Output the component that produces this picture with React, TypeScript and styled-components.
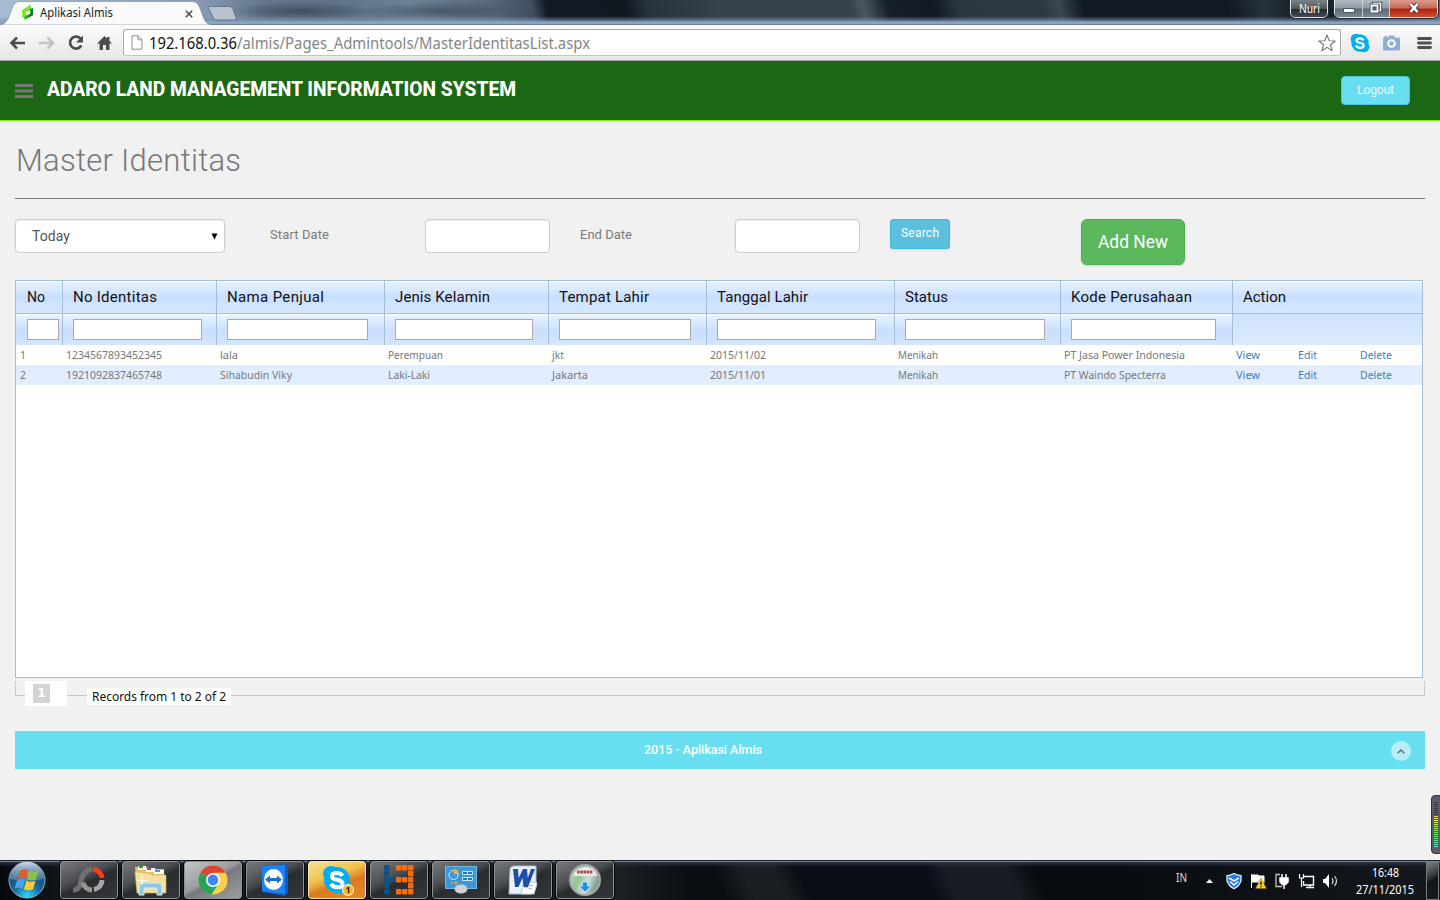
import React, { useLayoutEffect, useRef } from 'react';
import styled, { createGlobalStyle, css } from 'styled-components';

const ruda = `Roboto, "Open Sans", sans-serif`;
const tahoma = `"Noto Sans", "Open Sans", sans-serif`;

const GlobalStyle = createGlobalStyle`
  * { box-sizing: border-box; }
  body { margin: 0; background: #f1f1f1; overflow: hidden; }
  button, input { font: inherit; margin: 0; }
  svg { display: block; flex: none; }
  h1 { margin: 0; font-weight: 400; }
`;

/* A single line of text adjusted to a given width. */
const Line = styled.span`
  display: inline-block;
  white-space: nowrap;
  transform-origin: 0 50%;
`;

function Fit({ w, children }: { w: number; children: string }) {
  const ref = useRef<HTMLSpanElement>(null);
  useLayoutEffect(() => {
    const el = ref.current;
    if (!el) return;
    el.style.width = 'auto';
    el.style.transform = 'none';
    el.style.letterSpacing = '0px';
    const natural = el.getBoundingClientRect().width;
    if (natural > w * 1.02) el.style.transform = `scaleX(${w / natural})`;
    else el.style.letterSpacing = `${(w - natural) / Math.max(1, children.length - 1)}px`;
    el.style.width = `${w}px`;
  }, [w, children]);
  return <Line ref={ref}>{children}</Line>;
}

const Screen = styled.div`
  position: relative;
  width: 1440px;
  height: 900px;
  display: flex;
  flex-direction: column;
  overflow: hidden;
  background: #f1f1f1;
  color: #797979;
  font-family: ${ruda};
`;

/* ---------- browser window ---------- */

const TitleBar = styled.div`
  height: 25px;
  flex: none;
  display: flex;
  border-bottom: 1px solid #6e7f95;
  background:
    linear-gradient(180deg, transparent 0 68%, rgba(122, 148, 182, 0.6) 84%, #8ba3c2 92%),
    radial-gradient(ellipse 75px 9px at 300px 11px, rgba(38, 50, 66, 0.55), transparent),
    radial-gradient(ellipse 90px 9px at 440px 11px, rgba(44, 56, 72, 0.5), transparent),
    linear-gradient(75deg, #a9bdd4 0, #8397b0 205px, #63758a 260px, #5f7287 330px, #6d8196 400px, #56687c 480px, #3f4f61 518px, #121a23 532px, #101820 608px, #26323d 630px, #35424e 700px, #35424e 825px, #4a5763 838px, #17202a 862px, #111922 905px, #2a3641 930px, #2c3843 1010px, #3a4651 1028px, #111a22 1050px, #111922 1190px, #26323e 1225px, #0e161e 1270px, #1c2832 1300px, #76889b 1440px);
`;

const Tab = styled.div`
  position: relative;
  width: 206px;
  height: 25px;
  display: flex;
  align-items: center;
  padding-left: 21px;
  font: 12px/24px ${tahoma};
  color: #222;
`;

const TabShape = styled.svg`
  position: absolute;
  left: 0;
  top: 0;
`;

const TabIcon = styled.svg`
  position: relative;
  margin-right: 5px;
`;

const TabText = styled.div`
  position: relative;
  width: 145px;
  line-height: 25px;
`;

const TabClose = styled.svg`
  position: relative;
  top: 1px;
`;

const WindowControls = styled.div`
  display: flex;
  margin-left: auto;
  margin-right: 2px;
  height: 18px;
`;

const UserButton = styled.div`
  width: 38px;
  height: 18px;
  margin-right: 6px;
  border: 1px solid #dfe5ea;
  border-top: 0;
  border-radius: 0 0 5px 5px;
  outline: 1px solid #202a34;
  background: linear-gradient(#7c8084 0, #52575b 50%, #24292d 52%, #444a50);
  color: #fff;
  font: 12px/17px ${tahoma};
  text-align: center;
`;

const ControlGroup = styled.div`
  display: flex;
  border: 1px solid #dfe5ea;
  border-top: 0;
  border-radius: 0 0 5px 5px;
  outline: 1px solid #202a34;
  overflow: hidden;
`;

const Control = styled.div<{ $w: number; $close?: boolean }>`
  width: ${(p) => p.$w}px;
  display: flex;
  justify-content: center;
  border-right: 1px solid #c7ced6;
  background: ${(p) =>
    p.$close
      ? 'linear-gradient(#d99a8e 0, #c96a58 48%, #a92410 52%, #cf4a2c)'
      : 'linear-gradient(#b3bac3 0, #8f99a5 48%, #5d6976 52%, #7b8896)'};
  &:last-child { border-right: 0; }
`;

const Toolbar = styled.div`
  height: 36px;
  flex: none;
  display: flex;
  align-items: center;
  padding-left: 8px;
  border-bottom: 1px solid #a3a3a3;
  background: linear-gradient(#fbfbfb, #e6e6e6);
`;

const Omnibox = styled.div`
  width: 1218px;
  height: 27px;
  margin: 0 9px 0 9px;
  display: flex;
  align-items: center;
  padding: 0 4px 0 7px;
  border: 1px solid #a9a9a9;
  border-bottom-color: #c4c4c4;
  border-radius: 3px;
  background: #fff;
  font: 16px/24px ${tahoma};
  color: #868686;
  > svg:last-child { margin-left: auto; }
`;

const Host = styled.span`
  margin-left: 6px;
  color: #111;
`;

/* ---------- page ---------- */

const Header = styled.header`
  height: 60px;
  flex: none;
  display: flex;
  align-items: flex-start;
  padding: 0 30px 0 15px;
  border-bottom: 1px solid #7cf216;
  background: #1c6714;
`;

const Brand = styled.div`
  margin: 13px auto 0 14px;
  font: 800 21px/30px ${ruda};
  color: #fff;
`;

const Hamburger = styled.svg`
  margin-top: 23px;
`;

const LogoutButton = styled.button`
  width: 69px;
  height: 29px;
  margin-top: 15px;
  padding: 0 0 1px;
  border: 1px solid #4fc5d9;
  border-radius: 4px;
  background: #68dff0;
  color: #f2f2f2;
  font: 400 12px/25px ${ruda};
`;

const Content = styled.main`
  flex: 1;
  padding: 19px 15px 0;
  min-height: 0;
`;

const PageTitle = styled.h1`
  height: 59px;
  padding-left: 1px;
  border-bottom: 1px solid #777;
  font: 350 31px/41px ${ruda};
  color: #777;
`;

const FilterForm = styled.div`
  display: flex;
  align-items: flex-start;
  height: 61px;
  margin-top: 20px;
  font-size: 13px;
`;

const field = css`
  height: 34px;
  border: 1px solid #ccc;
  border-radius: 4px;
  background: #fff;
  box-shadow: inset 0 1px 1px rgba(0, 0, 0, 0.075);
`;

const PeriodSelect = styled.div`
  ${field}
  width: 210px;
  display: flex;
  align-items: center;
  justify-content: space-between;
  padding: 0 6px 0 16px;
  font-size: 14px;
  color: #555;
`;

const FieldLabel = styled.label`
  width: 155px;
  margin-left: 45px;
  line-height: 32px;
  & + input + & { margin-left: 30px; }
`;

const DateInput = styled.input`
  ${field}
  width: 125px;
  padding: 6px;
`;

const SearchButton = styled.button`
  width: 60px;
  height: 30px;
  margin-left: 30px;
  padding: 0 0 2px;
  border: 1px solid #46b8da;
  border-radius: 3px;
  background: #5bc0de;
  box-shadow: 0 1px 2px rgba(0, 0, 0, 0.12);
  color: #fff;
  font: 400 12px/26px ${ruda};
`;

const AddButton = styled.button`
  width: 104px;
  height: 46px;
  margin-left: 131px;
  padding: 0;
  border: 1px solid #4cae4c;
  border-radius: 6px;
  background: #5cb85c;
  box-shadow: 0 1px 2px rgba(0, 0, 0, 0.12);
  color: #fff;
  font: 400 19px/44px ${ruda};
`;

const GridPanel = styled.section`
  width: 1408px;
  height: 398px;
  border: 1px solid #a3bfd6;
  background: #fff;
`;

const GridRow = styled.div`
  display: grid;
  grid-template-columns: 47px 154px 168px 164px 158px 188px 166px 172px 189px;
`;

const HeadCell = styled.div`
  height: 33px;
  padding-left: 10px;
  border-right: 1px solid #a3bfd6;
  border-bottom: 1px solid #a3bfd6;
  background: linear-gradient(#fff 0, #e6f1ff 2px, #c9dfff 50%, #d3e6ff 85%, #d3e6ff);
  color: #111;
  font: 400 15px/32px ${ruda};
  &:first-child { padding-left: 11px; }
  &:last-child { border-right: 0; }
`;

const FilterCell = styled.div`
  height: 31px;
  padding: 5px 0 0 10px;
  border-right: 1px solid #a3bfd6;
  background: linear-gradient(#fdfdf8 0, #e6f1ff 2px, #c9dfff 55%, #d5e7ff);
  &:first-child { padding-left: 11px; }
  &:last-child { border-right: 0; background: linear-gradient(#cfe2fc, #dbeafe); }
`;

const FilterInput = styled.input<{ $w: number }>`
  display: block;
  width: ${(p) => p.$w}px;
  height: 21px;
  border: 1px solid #a9a9a9;
  background: #fff;
`;

const DataRow = styled(GridRow)<{ $alt: boolean }>`
  height: 20px;
  background: ${(p) => (p.$alt ? '#e2edff' : '#fff')};
  font: 11px/20px ${tahoma};
  color: #777;
`;

const DataCell = styled.div`
  padding-left: 3px;
  &:first-child { padding-left: 4px; }
`;

const Actions = styled(DataCell)`
  display: grid;
  grid-template-columns: 62px 62px 62px;
`;

const ActionLink = styled.a`
  color: #3f7fb8;
`;

const Pager = styled.nav`
  display: flex;
  align-items: flex-start;
  width: 1410px;
  height: 25px;
  margin: 3px 0 25px;
  padding-left: 10px;
  background:
    linear-gradient(#c8c8c4, #c8c8c4) 0 14px / 100% 1px no-repeat,
    linear-gradient(#c8c8c4, #c8c8c4) 0 0 / 1px 14px no-repeat,
    linear-gradient(#c8c8c4, #c8c8c4) 100% 0 / 1px 14px no-repeat;
`;

const PageBox = styled.div`
  width: 42px;
  height: 25px;
  padding: 3px 0 0 8px;
  background: #fff;
`;

const PageNumber = styled.div`
  width: 17px;
  height: 19px;
  background: #d3d3d3;
  color: #fff;
  font: 700 12px/19px "DejaVu Sans", sans-serif;
  text-align: center;
`;

const Records = styled.div`
  width: 144px;
  height: 17px;
  margin: 7px 0 0 20px;
  padding-left: 5px;
  background: #fff;
  color: #111;
  font: 12px/17px ${tahoma};
`;

const Footer = styled.footer`
  height: 38px;
  display: flex;
  align-items: center;
  padding: 0 14px 0 629px;
  background: #68dff0;
  color: #fff;
  font: 500 13px/38px ${ruda};
`;

const TopLink = styled.a`
  width: 20px;
  height: 20px;
  margin: 2px 0 0 auto;
  display: grid;
  place-items: center;
  border-radius: 50%;
  background: rgba(255, 255, 255, 0.5);
`;

/* ---------- desktop ---------- */

const Gauge = styled.div`
  position: absolute;
  left: 1431px;
  top: 795px;
  width: 12px;
  height: 59px;
  padding: 6px 0 0 2px;
  border: 1px solid #2f323d;
  border-radius: 4px;
  background: #5a5e6c;
`;

const Taskbar = styled.div`
  height: 40px;
  flex: none;
  display: flex;
  border-top: 1px solid #1b2330;
  background:
    linear-gradient(#76818f 0 1px, rgba(50, 62, 82, 0.8) 1px, transparent 6px),
    linear-gradient(65deg, transparent 660px, #1a1f22 685px 715px, #090d16 735px 850px, #191c23 868px 925px, transparent 950px),
    linear-gradient(90deg, #05080d 0, #10151a 55px, #1b2023 620px, #090e14 690px, #070c10 1100px, #0f1317 1300px, #15181c 1440px);
`;

const StartOrb = styled.div`
  width: 60px;
  padding: 0 0 0 8px;
`;

const TaskButton = styled.div<{ $tone?: 'active' | 'alert' }>`
  width: 58px;
  height: 38px;
  margin-right: 4px;
  display: grid;
  place-items: center;
  border: 1px solid ${(p) => (p.$tone === 'alert' ? '#fbe9a8' : '#8e9193')};
  border-radius: 3px;
  outline: 1px solid #05080c;
  background: ${(p) =>
    p.$tone === 'active'
      ? 'linear-gradient(150deg, #c3c5c6 0, #9a9c9e 45%, #77797b 52%, #9c9ea0)'
      : p.$tone === 'alert'
      ? 'linear-gradient(160deg, #f5e49a 0, #efc04a 40%, #d97a22 60%, #e58a2a)'
      : 'linear-gradient(155deg, #77797b 0, #4b4e51 40%, #2a2d30 54%, #33363a)'};
`;

const Tray = styled.div`
  display: flex;
  align-items: center;
  margin-left: auto;
  color: #fff;
  font: 12px/17px ${tahoma};
`;

const Language = styled.div`
  width: 29px;
  height: 24px;
  color: #d8dcd8;
`;

const Clock = styled.div`
  width: 58px;
  margin-left: 18px;
  display: flex;
  flex-direction: column;
  align-items: center;
`;

const ShowDesktop = styled.div`
  width: 13px;
  height: 38px;
  margin: 0 1px 0 12px;
  border: 1px solid #737880;
  background: linear-gradient(150deg, #7b8085, #3a3e43 35%, #111416 50%, #1b1e21);
`;

/* ---------- data ---------- */

const columns = [
  { title: 'No', text: 18, input: 32 },
  { title: 'No Identitas', text: 84, input: 129 },
  { title: 'Nama Penjual', text: 97, input: 141 },
  { title: 'Jenis Kelamin', text: 95, input: 138 },
  { title: 'Tempat Lahir', text: 90, input: 132 },
  { title: 'Tanggal Lahir', text: 91, input: 159 },
  { title: 'Status', text: 43, input: 140 },
  { title: 'Kode Perusahaan', text: 121, input: 145 },
  { title: 'Action', text: 43, input: 0 },
];

const rows: [string, number][][] = [
  [['1', 6], ['1234567893452345', 96], ['lala', 18], ['Perempuan', 55], ['jkt', 12], ['2015/11/02', 56], ['Menikah', 40], ['PT Jasa Power Indonesia', 121]],
  [['2', 6], ['1921092837465748', 96], ['Sihabudin Viky', 72], ['Laki-Laki', 42], ['Jakarta', 36], ['2015/11/01', 56], ['Menikah', 40], ['PT Waindo Specterra', 102]],
];

/* ---------- taskbar icons ---------- */

const WindowsOrb = () => (
  <svg width="38" height="38" viewBox="0 0 38 38">
    <defs>
      <radialGradient id="orb" cx=".5" cy=".95" r=".85">
        <stop offset="0" stopColor="#35d6fb" />
        <stop offset=".45" stopColor="#16689c" />
        <stop offset="1" stopColor="#1b3f5c" />
      </radialGradient>
      <linearGradient id="orbShine" x2="0" y2="1">
        <stop offset="0" stopColor="#dcebf2" stopOpacity=".9" />
        <stop offset="1" stopColor="#8fb0c2" stopOpacity=".35" />
      </linearGradient>
    </defs>
    <circle cx="19" cy="19" r="18" fill="url(#orb)" stroke="#8fb4c6" />
    <path d="M2 18A17 17 0 0 1 36 18Q19 22 2 18Z" fill="url(#orbShine)" />
    <path d="M12 10q4-3 8-1l-2.300 8.500q-4-2-8 .5Z" fill="#e8592a" />
    <path d="M21 10q4 2.500 9.500 0l-2.500 8.500q-5 2-9.300-.4Z" fill="#8cc043" />
    <path d="M9 19.500q4-2.500 8.200-.7l-2.300 8.500q-4-2-8.400.5Z" fill="#4aa5e4" />
    <path d="M18.300 19.500q4 2.200 9.200.5l-2.600 8.600q-4.500 1.800-9-.6Z" fill="#fccb35" />
  </svg>
);

const TunerIcon = () => (
  <svg width="34" height="30" viewBox="0 0 34 30" fill="none" strokeWidth="5">
    <path d="M1 25q5 0 7-5q2-14 12-16.500" stroke="#6f6f6f" />
    <path d="M21 4A10.500 10.500 0 0 1 30 13" stroke="#fb3b14" />
    <path d="M30 15A9.500 9.500 0 0 1 22 24.500" stroke="#a7a7a7" />
    <path d="M20 25A9.500 9.500 0 0 1 11 17.500" stroke="#949494" />
  </svg>
);

const ExplorerIcon = () => (
  <svg width="34" height="32" viewBox="0 0 34 32">
    <path d="M1 3h12l2 2h15v21H3Z" fill="#e5c468" />
    <path d="M4 2h8v4H4Z" fill="#f8f8ee" /><path d="M5 2h4v2H5Z" fill="#2f9b38" />
    <path d="M12 4h9v4h-9Z" fill="#fff" /><path d="M13 4h4v2h-4Z" fill="#c34343" />
    <path d="M20 6h10v4H20Z" fill="#fff" /><path d="M21 6h5v2h-5Z" fill="#3b9ad9" />
    <path d="M1 8l14 1 3 2h14v18H3Z" fill="#f7dfa0" stroke="#d3b45d" strokeWidth=".6" />
    <path d="M5 31v-9q0-3 3-3h17q3 0 3 3v9h-5v-7H10v7Z" fill="#8dc8e9" stroke="#d1ecf9" />
    <path d="M8 12v9M4 16.500h9" stroke="#fff" strokeWidth="1" />
  </svg>
);

const ChromeIcon = () => (
  <svg width="30" height="30" viewBox="0 0 30 30">
    <circle cx="15" cy="15" r="14.500" fill="#fbd04b" />
    <path d="M15 15L2.400 7.700A14.500 14.500 0 0 1 27.600 7.700H15Z" fill="#db4437" />
    <path d="M15 15L2.400 7.700A14.500 14.500 0 0 0 13.500 29.500L20.600 18.500Z" fill="#27a35a" />
    <circle cx="15" cy="15" r="7" fill="#fff" /><circle cx="15" cy="15" r="5.400" fill="#4285f4" />
  </svg>
);

const TeamViewerIcon = () => (
  <svg width="28" height="32" viewBox="0 0 28 32">
    <path d="M1 2l23-2 3 3v25l-3 4-23-4Z" fill="#0b5bd0" />
    <path d="M1 2l23-1v29L1 27Z" fill="#2083f4" />
    <ellipse cx="12.500" cy="15.500" rx="9.500" ry="10.500" fill="#fff" />
    <path d="M4 15.500l5-4v2.500h7v-2.500l5 4-5 4v-2.500H9v2.500Z" fill="#166fd0" />
  </svg>
);

const SkypeShape = ({ size, weight }: { size: number; weight: number }) => (
  <svg width={size} height={size} viewBox="0 0 30 30">
    <circle cx="15" cy="15" r="13" fill="#00aff0" />
    <circle cx="9" cy="9" r="8" fill="#00aff0" />
    <circle cx="21" cy="21" r="8" fill="#00aff0" />
    <path d="M20.500 10.800Q18.500 8 15 8q-5 0-5 3.300 0 2.700 5 3.500 5.500 1 5.500 4 0 3.500-5.500 3.500-4 0-6-3.500" fill="none" stroke="#fff" strokeWidth={weight} />
  </svg>
);

const SkypeTaskWrap = styled.div`
  position: relative;
`;

const CountBadge = styled.span`
  position: absolute;
  right: -2px;
  bottom: -1px;
  width: 12px;
  height: 12px;
  border: 1px solid #fff;
  border-radius: 50%;
  background: #fcb714;
  color: #000;
  font: 600 9px/10px ${tahoma};
  text-align: center;
`;

const BlocksIcon = () => {
  const cells: [number, number, string][] = [];
  [0, 1, 2, 3, 4].forEach((r) => cells.push([0, r, '#0d5184']));
  cells.push([1, 2, '#0d5184']);
  [[2, 0], [3, 0], [4, 0], [4, 1], [2, 2], [3, 2], [4, 2], [4, 3], [2, 4], [3, 4], [4, 4]].forEach(([c, r]) => cells.push([c, r, '#fb6a0c']));
  return (
    <svg width="30" height="30">
      {cells.map(([c, r, fill], i) => (
        <rect key={i} x={c * 6} y={r * 6} width="5.400" height="5.400" rx="1" fill={fill} />
      ))}
    </svg>
  );
};

const ControlPanelIcon = () => (
  <svg width="32" height="28" viewBox="0 0 32 28">
    <rect x=".5" y=".5" width="31" height="22" fill="#3f97d4" stroke="#76b7e2" />
    <circle cx="8.500" cy="9" r="4.500" fill="none" stroke="#d5ecf9" />
    <path d="M9 8V3a5.500 5.500 0 0 1 5 5Z" fill="#fbb034" />
    <path d="M17.500 5.500h10v3h-10ZM17.500 11.500h10v3h-10Z" fill="#1679b9" stroke="#c9e7f8" /><path d="M22.500 5v4M22.500 11v4" stroke="#c9e7f8" />
    <circle cx="7" cy="17" r="1" fill="#fb9e2e" /><circle cx="11" cy="17" r="1.500" fill="#fb9e2e" />
    <ellipse cx="16" cy="23" rx="6.500" ry="4.500" fill="#cfd1d2" />
  </svg>
);

const WordIcon = () => (
  <svg width="30" height="30" viewBox="0 0 30 30">
    <path d="M2 5q0-4 5-4h21v22l-5 6H1Z" fill="#eaf1fb" stroke="#a9bfe2" />
    <path d="M16 15l13 3-3 11H13Z" fill="#fff" stroke="#b9c9e4" /><path d="M17 19l8 2M16 22l8 2" stroke="#9fb5da" />
    <path d="M5 4h5l.7 9L15 4h4l.8 9L23 4h4l-7 18h-4.500L14.500 13 10.500 22H7Z" fill="#1d4fa6" />
  </svg>
);

const DiscIcon = () => (
  <svg width="32" height="32" viewBox="0 0 32 32">
    <defs>
      <linearGradient id="disc" x2="1" y2=".4">
        <stop offset="0" stopColor="#c9cec9" /><stop offset=".4" stopColor="#8fc695" />
        <stop offset=".7" stopColor="#cfdcdb" /><stop offset="1" stopColor="#7d9e8c" />
      </linearGradient>
    </defs>
    <circle cx="16" cy="16" r="15" fill="url(#disc)" stroke="#a5a5a5" strokeWidth="2" />
    <path d="M4 12A12.500 12.500 0 0 1 28 12Z" fill="#eeeaea" />
    <path d="M8 8h16" stroke="#a84545" strokeWidth="3" strokeDasharray="2.500 .7" />
    <path d="M13.500 18h5v4h3.500l-6 6-6-6h3.500Z" fill="#228fe0" stroke="#e1f2fc" strokeWidth=".7" />
  </svg>
);

/* ---------- application ---------- */

export default function App() {
  return (
    <Screen>
      <GlobalStyle />
      <TitleBar>
        <Tab>
          <TabShape width="240" height="25">
            <path d="M0 25Q6 24 8 19L13 6Q15 1.500 19 1.500H193Q197 1.500 199 6L204 19Q206 24 211 25Z" fill="#fafafa" stroke="#8795a6" strokeWidth=".7" />
            <path d="M209 6.500h20q3 0 4 3l3 8q1 2.500-2 2.500h-17q-3 0-4-3l-4-8q-1-2.500 0-2.500Z" fill="#b9c3d0" stroke="#5c6b7d" strokeWidth=".8" />
          </TabShape>
          <TabIcon width="14" height="15" viewBox="0 0 14 15">
            <path d="M1 5.500L9.500 0v3.500L12 3v7l-8.500 5v-3.500L1 12.500Z" fill="#25b01d" />
            <path d="M1 5.500L9.500 0v3.500L5 6.500v4L1 12.500Z" fill="#7fe82c" />
            <path d="M5 6.500l4.500-1.500v3.500L5 10.500Z" fill="#fdfbd0" />
            <path d="M9.500 5L12 3v7l-5 3 2.500-4.500Z" fill="#0d7d22" />
          </TabIcon>
          <TabText><Fit w={73}>Aplikasi Almis</Fit></TabText>
          <TabClose width="8" height="8" viewBox="0 0 8 8"><path d="M.8.8l6.400 6.400M7.200.8L.8 7.200" stroke="#4f4f4f" strokeWidth="1.600" /></TabClose>
        </Tab>
        <WindowControls>
          <UserButton><Fit w={21}>Nuri</Fit></UserButton>
          <ControlGroup>
            <Control $w={28}><svg width="12" height="16"><rect x=".5" y="8.500" width="11" height="4" fill="#fff" stroke="#4c5662" /></svg></Control>
            <Control $w={27}><svg width="14" height="16" fill="none"><path d="M4.500 3.500h7v7h-7Z" stroke="#47505c" strokeWidth="3.500" /><path d="M4.500 3.500h7v7h-7Z" stroke="#fff" strokeWidth="1.400" /><path d="M2.500 5.500h6v6h-6Z" fill="#596470" stroke="#47505c" strokeWidth="3.500" /><path d="M2.500 5.500h6v6h-6Z" stroke="#fff" strokeWidth="1.800" /></svg></Control>
            <Control $w={47} $close><svg width="12" height="16" fill="none"><path d="M2.500 4l7 8M9.500 4l-7 8" stroke="#453b49" strokeWidth="4.500" /><path d="M2.500 4l7 8M9.500 4l-7 8" stroke="#fff" strokeWidth="2.600" /></svg></Control>
          </ControlGroup>
        </WindowControls>
      </TitleBar>

      <Toolbar>
        <svg width="106" height="20" viewBox="0 0 106 20" fill="none">
          <path d="M17 10H4M9 4.500L3.500 10 9 15.500" stroke="#4c4c4c" strokeWidth="2.500" />
          <path d="M31 10h13M39.500 4.500L45 10l-5.500 5.500" stroke="#c3c3c3" strokeWidth="2.500" />
          <path d="M73 6.200A6 6 0 1 0 73.300 12.500" stroke="#4c4c4c" strokeWidth="2.600" />
          <path d="M75 2.500v7h-7Z" fill="#4c4c4c" />
          <path d="M89 10.500L96.500 3l2.500 2.500V4h2.500v4l2.500 2.500h-2.500V17h-3.500v-5h-3v5h-3.500v-6.500Z" fill="#4c4c4c" />
        </svg>
        <Omnibox>
          <svg width="12" height="15" viewBox="0 0 12 15" fill="none" stroke="#8d8d8d"><path d="M1 .8h6l4 4v9.400H1ZM7 .8v4h4" /></svg>
          <Host><Fit w={88}>192.168.0.36</Fit></Host>
          <Fit w={353}>/almis/Pages_Admintools/MasterIdentitasList.aspx</Fit>
          <svg width="18" height="18" viewBox="0 0 18 18" fill="none" stroke="#777" strokeWidth="1.100"><path d="M9 1l2.200 5.700 6.100.3-4.800 3.800 1.700 6L9 13.400l-5.200 3.400 1.700-6L.7 7l6.100-.3Z" strokeLinejoin="round" /></svg>
        </Omnibox>
        <SkypeShape size={20} weight={3.5} />
        <svg width="65" height="20" viewBox="0 0 65 20">
          <path d="M13 5.500q0-1 1-1h.5V3H17v1.500h1l1-2h5l1 2h4q1 0 1 1V16q0 1.500-1 1.500H14q-1 0-1-1.500Z" fill="#8fafd0" />
          <circle cx="21.500" cy="10.500" r="3.300" fill="none" stroke="#fff" strokeWidth="2" />
          <path d="M48.500 5.500h12M48.500 10h12M48.500 14.500h12" stroke="#505050" strokeWidth="2.800" strokeLinecap="round" />
        </svg>
      </Toolbar>

      <Header>
        <Hamburger width="18" height="15"><path d="M0 1.500h18M0 7h18M0 12.500h18" stroke="#777" strokeWidth="3" /></Hamburger>
        <Brand><Fit w={469}>ADARO LAND MANAGEMENT INFORMATION SYSTEM</Fit></Brand>
        <LogoutButton><Fit w={37}>Logout</Fit></LogoutButton>
      </Header>

      <Content>
        <PageTitle><Fit w={225}>Master Identitas</Fit></PageTitle>
        <FilterForm>
          <PeriodSelect>
            <Fit w={38}>Today</Fit>
            <svg width="7" height="7"><path d="M.5 .5h6L3.500 6.500Z" fill="#000" /></svg>
          </PeriodSelect>
          <FieldLabel><Fit w={59}>Start Date</Fit></FieldLabel>
          <DateInput />
          <FieldLabel><Fit w={52}>End Date</Fit></FieldLabel>
          <DateInput />
          <SearchButton><Fit w={38}>Search</Fit></SearchButton>
          <AddButton><Fit w={70}>Add New</Fit></AddButton>
        </FilterForm>

        <GridPanel>
          <GridRow>
            {columns.map((c) => (
              <HeadCell key={c.title}><Fit w={c.text}>{c.title}</Fit></HeadCell>
            ))}
          </GridRow>
          <GridRow>
            {columns.map((c) => (
              <FilterCell key={c.title}>{c.input > 0 && <FilterInput $w={c.input} />}</FilterCell>
            ))}
          </GridRow>
          {rows.map((row, i) => (
            <DataRow key={i} $alt={i % 2 === 1}>
              {row.map(([text, w], j) => (
                <DataCell key={j}><Fit w={w}>{text}</Fit></DataCell>
              ))}
              <Actions>
                <ActionLink><Fit w={24}>View</Fit></ActionLink>
                <ActionLink><Fit w={19}>Edit</Fit></ActionLink>
                <ActionLink><Fit w={32}>Delete</Fit></ActionLink>
              </Actions>
            </DataRow>
          ))}
        </GridPanel>

        <Pager>
          <PageBox><PageNumber>1</PageNumber></PageBox>
          <Records><Fit w={134}>Records from 1 to 2 of 2</Fit></Records>
        </Pager>

        <Footer>
          <Fit w={118}>2015 - Aplikasi Almis</Fit>
          <TopLink><svg width="8" height="5" fill="none"><path d="M.7 4.300L4 1l3.300 3.300" stroke="#667" strokeWidth="1.400" /></svg></TopLink>
        </Footer>
      </Content>

      <Gauge>
        <svg width="5" height="46">
          {Array.from({ length: 23 }, (_, i) => (
            <rect key={i} y={i * 2} width="4" height="1" fill={i < 7 ? '#343742' : `hsl(${46 + (i - 7) * 7.8} 75% 62%)`} />
          ))}
        </svg>
      </Gauge>

      <Taskbar>
        <StartOrb><WindowsOrb /></StartOrb>
        <TaskButton><TunerIcon /></TaskButton>
        <TaskButton><ExplorerIcon /></TaskButton>
        <TaskButton $tone="active"><ChromeIcon /></TaskButton>
        <TaskButton><TeamViewerIcon /></TaskButton>
        <TaskButton $tone="alert">
          <SkypeTaskWrap><SkypeShape size={30} weight={4} /><CountBadge>1</CountBadge></SkypeTaskWrap>
        </TaskButton>
        <TaskButton><BlocksIcon /></TaskButton>
        <TaskButton><ControlPanelIcon /></TaskButton>
        <TaskButton><WordIcon /></TaskButton>
        <TaskButton><DiscIcon /></TaskButton>
        <Tray>
          <Language><Fit w={11}>IN</Fit></Language>
          <svg width="133" height="20" viewBox="0 0 133 20">
            <path d="M1 12l3.500-4L8 12Z" fill="#fff" />
            <path d="M29 2.500q4 2.200 7 2.200v5q-1.500 5.500-7 8-5.500-2.500-7-8v-5q3 0 7-2.200Z" fill="#1e78e8" stroke="#e5f0fd" strokeWidth="1.300" />
            <path d="M24 7l5 3 5-3M25 10.500l4 3.500 4-3.500" fill="none" stroke="#fff" strokeWidth="1.500" />
            <path d="M46.500 3v14M47 4h6l1 1h5v7h-5l-1-1h-6Z" fill="#fff" stroke="#fff" />
            <path d="M56 7l5.500 10.500h-11Z" fill="#f8d21c" stroke="#725f00" strokeWidth=".5" /><path d="M56 10.500v3.500M56 15v1.300" stroke="#111" strokeWidth="1.300" />
            <path d="M75 3.500h-4v12h6" fill="none" stroke="#c4c4c4" strokeWidth="1.300" /><path d="M75 7h8v4l-2.500 2.500h-3L75 11ZM77 3v4M81 3v4M79 13v5" fill="#fff" stroke="#fff" strokeWidth="1.500" />
            <path d="M99 5.500h9.500v8.500H98.500V10M101 16.500h8M105 14v3" fill="none" stroke="#fff" strokeWidth="1.400" /><path d="M94.500 3v4h4V3M96.500 7v9" fill="none" stroke="#fff" strokeWidth="1.200" />
            <path d="M118 8h2l4-5v14l-4-5h-2Z" fill="#fff" /><path d="M127 7q2 3 0 6M129.500 5q4 5 0 10" fill="none" stroke="#ddd" strokeWidth="1.200" />
          </svg>
          <Clock>
            <Fit w={27}>16:48</Fit>
            <Fit w={58}>27/11/2015</Fit>
          </Clock>
          <ShowDesktop />
        </Tray>
      </Taskbar>
    </Screen>
  );
}
